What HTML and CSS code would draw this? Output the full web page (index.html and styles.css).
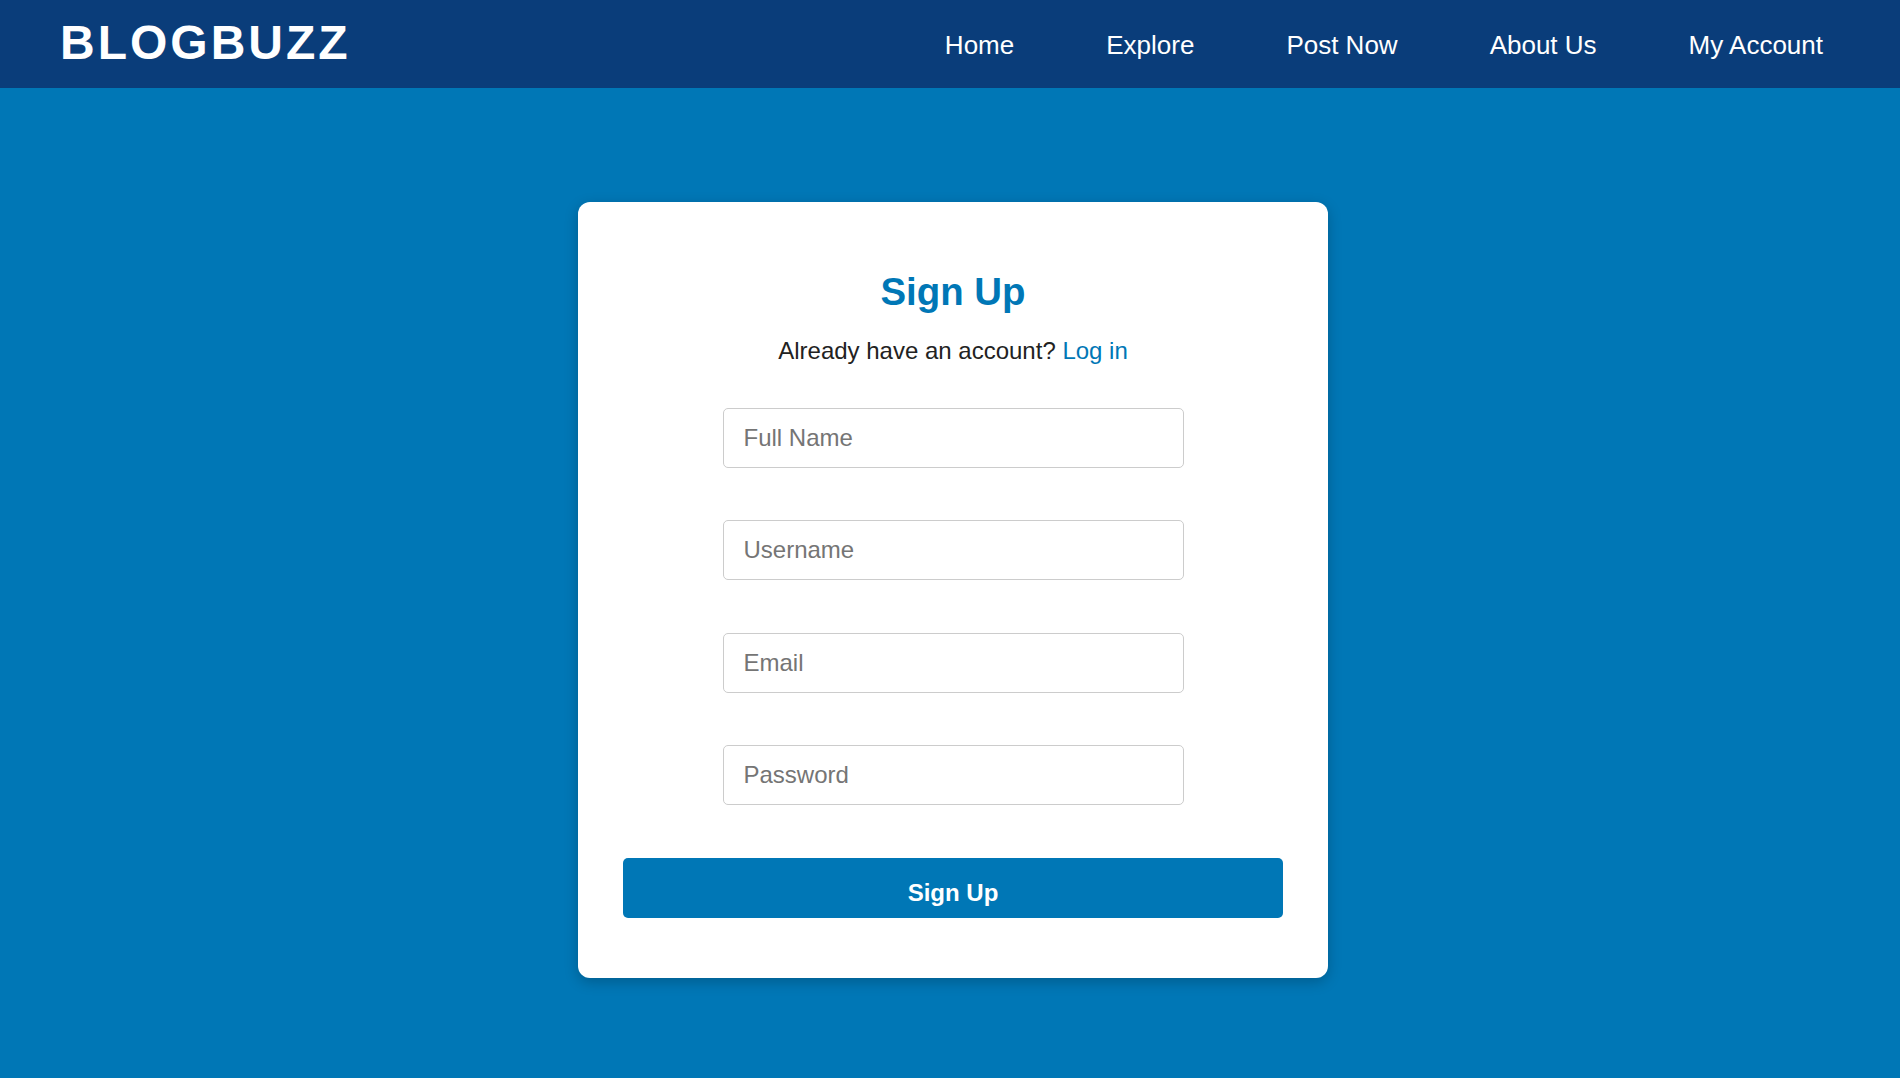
FILE: index.html
```html
<!DOCTYPE html>
<html lang="en">
<head>
<meta charset="UTF-8">
<title>BlogBuzz - Sign Up</title>
<link rel="stylesheet" href="styles.css">
</head>
<body>
<header class="site-header">
  <div class="logo">BLOGBUZZ</div>
  <nav class="nav">
    <a href="#" class="nav-link">Home</a>
    <a href="#" class="nav-link">Explore</a>
    <a href="#" class="nav-link">Post Now</a>
    <a href="#" class="nav-link">About Us</a>
    <a href="#" class="nav-link">My Account</a>
  </nav>
</header>
<main class="main">
  <section class="card">
    <h2 class="card-title">Sign Up</h2>
    <p class="card-sub">Already have an account? <a href="#" class="link">Log in</a></p>
    <form class="form">
      <input class="field" type="text" placeholder="Full Name">
      <input class="field" type="text" placeholder="Username">
      <input class="field" type="email" placeholder="Email">
      <input class="field" type="password" placeholder="Password">
      <button class="btn" type="button">Sign Up</button>
    </form>
  </section>
</main>
</body>
</html>
```
FILE: styles.css
```css
* { box-sizing: border-box; }
html, body {
  margin: 0;
  padding: 0;
}
body {
  font-family: "Liberation Sans", Arial, sans-serif;
  background: #0077b6;
  min-height: 1078px;
}
.site-header {
  height: 88px;
  background: #0a3d7a;
  display: flex;
  align-items: center;
  justify-content: space-between;
  padding: 0 77px 0 60px;
}
.logo {
  color: #fff;
  font-size: 48px;
  font-weight: bold;
  letter-spacing: 3px;
  margin-top: -3px;
}
.nav {
  display: flex;
  gap: 92px;
  margin-top: 2px;
}
.nav-link {
  color: #fff;
  text-decoration: none;
  font-size: 26px;
}
.main {
  display: flex;
  justify-content: center;
  padding: 114px 0 0 6px;
}
.card {
  width: 750px;
  background: #fff;
  border-radius: 12px;
  padding: 45px 45px 60px;
  box-shadow: 0 4px 14px rgba(0, 0, 0, 0.22);
  text-align: center;
}
.card-title {
  margin: 23px 0 23px;
  font-size: 38.4px;
  font-weight: bold;
  color: #0077b6;
  line-height: normal;
}
.card-sub {
  margin: 0 0 43px;
  font-size: 24px;
  color: #222;
  line-height: normal;
}
.link {
  color: #0077b6;
  text-decoration: none;
}
.form {
  display: flex;
  flex-direction: column;
  align-items: center;
  gap: 52.4px;
}
.field {
  width: 461px;
  height: 60px;
  padding: 0 20px;
  border: 1px solid #ccc;
  border-radius: 5px;
  font-family: "Liberation Sans", Arial, sans-serif;
  font-size: 24px;
  color: #333;
  background: #fff;
  outline: none;
}
.field::placeholder {
  color: #757575;
}
.btn {
  width: 100%;
  height: 60px;
  padding: 10px 0 0;
  border: none;
  border-radius: 5px;
  background: #0077b6;
  color: #fff;
  font-family: "Liberation Sans", Arial, sans-serif;
  font-size: 24px;
  font-weight: bold;
  cursor: pointer;
}
```
